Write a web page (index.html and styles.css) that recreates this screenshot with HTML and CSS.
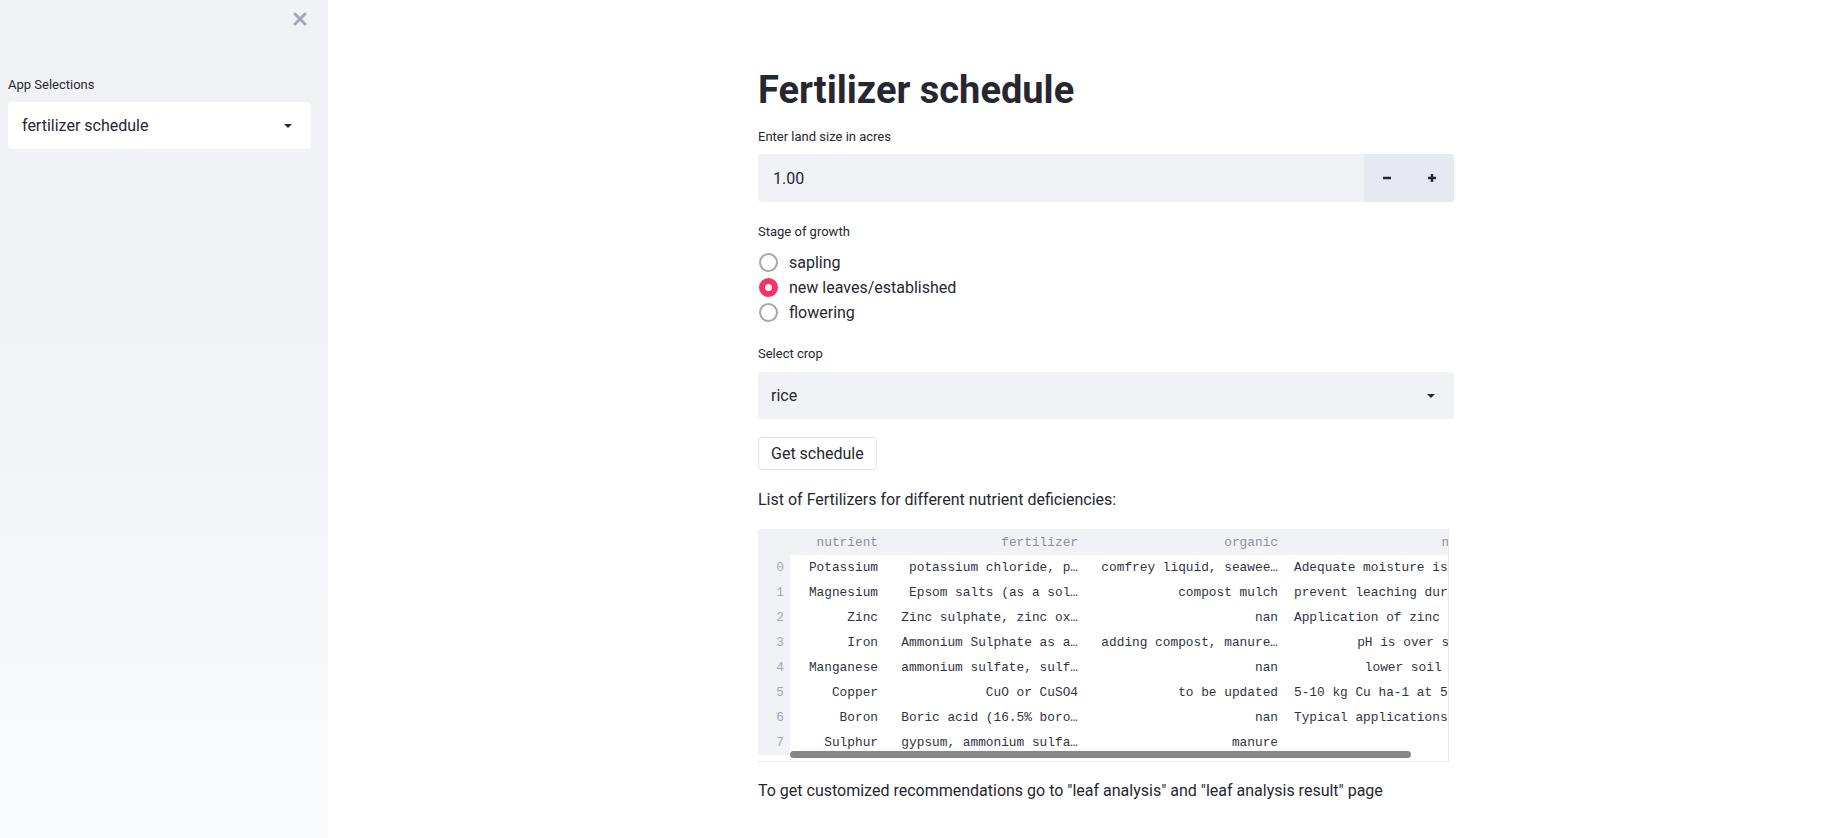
FILE: index.html
```html
<!DOCTYPE html>
<html lang="en">
<head>
<meta charset="utf-8">
<title>Fertilizer schedule</title>
<link rel="stylesheet" href="styles.css">
</head>
<body>
<div class="app">
  <aside class="sidebar">
    <div class="sidebar-top">
      <button class="close-btn" aria-label="Close sidebar">
        <svg width="14" height="14" viewBox="0 0 14 14"><path d="M2 2 L12 12 M12 2 L2 12" stroke="#a3a8b4" stroke-width="3" stroke-linecap="round"/></svg>
      </button>
    </div>
    <div class="sidebar-body">
      <div class="label">App Selections</div>
      <div class="select select-white">
        <span>fertilizer schedule</span>
        <svg class="caret" width="10" height="6" viewBox="0 0 10 6"><path d="M1 1 L9 1 L5 5 Z" fill="#262730"/></svg>
      </div>
    </div>
  </aside>
  <main class="main">
    <div class="block">
      <h1 class="title">Fertilizer schedule</h1>

      <div class="label label-main">Enter land size in acres</div>
      <div class="number-input">
        <div class="number-value">1.00</div>
        <div class="steppers">
          <div class="step"><svg width="10" height="10" viewBox="0 0 10 10"><path d="M1 5 H9" stroke="#262730" stroke-width="2.4"/></svg></div>
          <div class="step"><svg width="10" height="10" viewBox="0 0 10 10"><path d="M1 5 H9 M5 1 V9" stroke="#262730" stroke-width="2.4"/></svg></div>
        </div>
      </div>

      <div class="label label-radio">Stage of growth</div>
      <div class="radios">
        <div class="radio"><span class="dot"></span><span>sapling</span></div>
        <div class="radio radio-on"><span class="dot"></span><span>new leaves/established</span></div>
        <div class="radio"><span class="dot"></span><span>flowering</span></div>
      </div>

      <div class="label label-crop">Select crop</div>
      <div class="select select-gray">
        <span>rice</span>
        <svg class="caret" width="10" height="6" viewBox="0 0 10 6"><path d="M1 1 L9 1 L5 5 Z" fill="#262730"/></svg>
      </div>

      <button class="btn">Get schedule</button>

      <p class="para">List of Fertilizers for different nutrient deficiencies:</p>

      <div class="df">
        <table class="df-table">
          <colgroup>
            <col class="c-idx"><col class="c-1"><col class="c-2"><col class="c-3"><col class="c-4">
          </colgroup>
          <thead>
            <tr><th></th><th>nutrient</th><th>fertilizer</th><th>organic</th><th>notes</th></tr>
          </thead>
          <tbody>
            <tr><th>0</th><td>Potassium</td><td>potassium chloride, p…</td><td>comfrey liquid, seawee…</td><td class="long">Adequate moisture is essential for potassium uptake</td></tr>
            <tr><th>1</th><td>Magnesium</td><td>Epsom salts (as a sol…</td><td>compost mulch</td><td class="long">prevent leaching during heavy rains</td></tr>
            <tr><th>2</th><td>Zinc</td><td>Zinc sulphate, zinc ox…</td><td>nan</td><td class="long">Application of zinc sulphate at 25 kg/ha</td></tr>
            <tr><th>3</th><td>Iron</td><td>Ammonium Sulphate as a…</td><td>adding compost, manure…</td><td>pH is over seven</td></tr>
            <tr><th>4</th><td>Manganese</td><td>ammonium sulfate, sulf…</td><td>nan</td><td>lower soil pH 6</td></tr>
            <tr><th>5</th><td>Copper</td><td>CuO or CuSO4</td><td>to be updated</td><td class="long">5-10 kg Cu ha-1 at 5 year intervals</td></tr>
            <tr><th>6</th><td>Boron</td><td>Boric acid (16.5% boro…</td><td>nan</td><td class="long">Typical applications are 0.5-2 kg B/ha</td></tr>
            <tr><th>7</th><td>Sulphur</td><td>gypsum, ammonium sulfa…</td><td>manure</td><td></td></tr>
          </tbody>
        </table>
        <div class="hscroll"><div class="hthumb"></div></div>
      </div>

      <p class="para para-last">To get customized recommendations go to "leaf analysis" and "leaf analysis result" page</p>
    </div>
  </main>
</div>
</body>
</html>
```

FILE: styles.css
```css
* { box-sizing: border-box; }
html, body { margin: 0; padding: 0; }
body {
  font-family: "Roboto", "Noto Sans", sans-serif;
  color: #262730;
  background: #ffffff;
  width: 1833px;
  height: 838px;
  overflow: hidden;
}
.app {
  display: flex;
  height: 838px;
}
.sidebar {
  width: 328px;
  flex: 0 0 328px;
  height: 838px;
  background: linear-gradient(180deg, #f0f2f6 0%, #f0f2f6 40%, #fafbfc 100%);
  padding: 0 17px 0 8px;
}
.sidebar-top {
  display: flex;
  justify-content: flex-end;
  height: 38px;
  padding-top: 12px;
  padding-right: 4px;
}
.close-btn {
  border: 0;
  background: transparent;
  padding: 0;
  width: 14px;
  height: 14px;
  display: flex;
}
.sidebar-body {
  padding-top: 37px;
}
.label {
  font-size: 13px;
  line-height: 20px;
  color: #262730;
}
.select {
  height: 47px;
  border-radius: 4px;
  display: flex;
  align-items: center;
  justify-content: space-between;
  font-size: 16px;
  padding: 0 18px 0 14px;
}
.sidebar .select { margin-top: 7px; }
.select-white { background: #ffffff; }
.select-gray { background: #f0f2f6; padding-left: 13px; }
.caret { display: block; }

.main {
  flex: 1;
  display: flex;
  justify-content: center;
  padding-left: 51px;
}
.block {
  width: 696px;
  padding-top: 68px;
}
.title {
  margin: 0;
  font-size: 38px;
  line-height: 44px;
  font-weight: 700;
  letter-spacing: 0;
}
.label-main { margin-top: 15px; }
.number-input {
  margin-top: 7px;
  height: 48px;
  display: flex;
  border-radius: 4px;
  background: #f0f2f6;
  overflow: hidden;
}
.number-value {
  flex: 1;
  display: flex;
  align-items: center;
  padding-left: 15px;
  font-size: 16px;
}
.steppers {
  display: flex;
  width: 90px;
  background: #e6e9ef;
}
.step {
  flex: 1;
  display: flex;
  align-items: center;
  justify-content: center;
}
.label-radio { margin-top: 20px; }
.radios {
  margin-top: 8px;
  display: flex;
  flex-direction: column;
}
.radio {
  height: 25px;
  display: flex;
  align-items: center;
  font-size: 16px;
}
.dot {
  width: 19px;
  height: 19px;
  border-radius: 50%;
  border: 2px solid #a3a8b4;
  margin: 0 11px 0 1px;
  background: #fff;
  flex: 0 0 19px;
}
.radio-on .dot {
  border: 6px solid #f63366;
  background: #ffffff;
}
.label-crop { margin-top: 19px; }
.select-gray { margin-top: 8px; }
.btn {
  margin-top: 18px;
  display: block;
  height: 33px;
  padding: 0 12px;
  font-family: inherit;
  font-size: 16px;
  color: #262730;
  background: #ffffff;
  border: 1px solid #e2e4ea;
  border-radius: 4px;
}
.para {
  margin: 18px 0 0 0;
  font-size: 16px;
  line-height: 24px;
}
.df {
  position: relative;
  margin-top: 17px;
  width: 691px;
  height: 233px;
  overflow: hidden;
  border-right: 1px solid #e6e9ef;
  border-bottom: 1px solid #e6e9ef;
  background: #ffffff;
}
.df-table {
  border-collapse: collapse;
  table-layout: fixed;
  width: 730px;
  font-family: "Liberation Mono", "DejaVu Sans Mono", monospace;
  font-size: 12.8px;
  color: #31333f;
}
.c-idx { width: 32px; }
.c-1 { width: 96px; }
.c-2 { width: 200px; }
.c-3 { width: 200px; }
.c-4 { width: 202px; }
.df-table th, .df-table td {
  padding: 0 8px;
  text-align: right;
  white-space: nowrap;
  overflow: hidden;
  font-weight: 400;
}
.df-table td.long { text-overflow: ellipsis; }
.df-table thead th {
  height: 26px;
  background: #f0f2f6;
  color: #8c8f99;
}
.df-table tbody tr { height: 25px; }
.df-table tbody th {
  background: #f0f2f6;
  color: #a3a8b4;
  padding-right: 6px;
}
.df-table tbody td { background: #ffffff; }
.hscroll {
  position: absolute;
  left: 32px;
  right: 0;
  bottom: 3px;
  height: 7px;
}
.hthumb {
  width: 621px;
  height: 7px;
  border-radius: 4px;
  background: #878787;
}
.para-last { margin-top: 17px; }
```
